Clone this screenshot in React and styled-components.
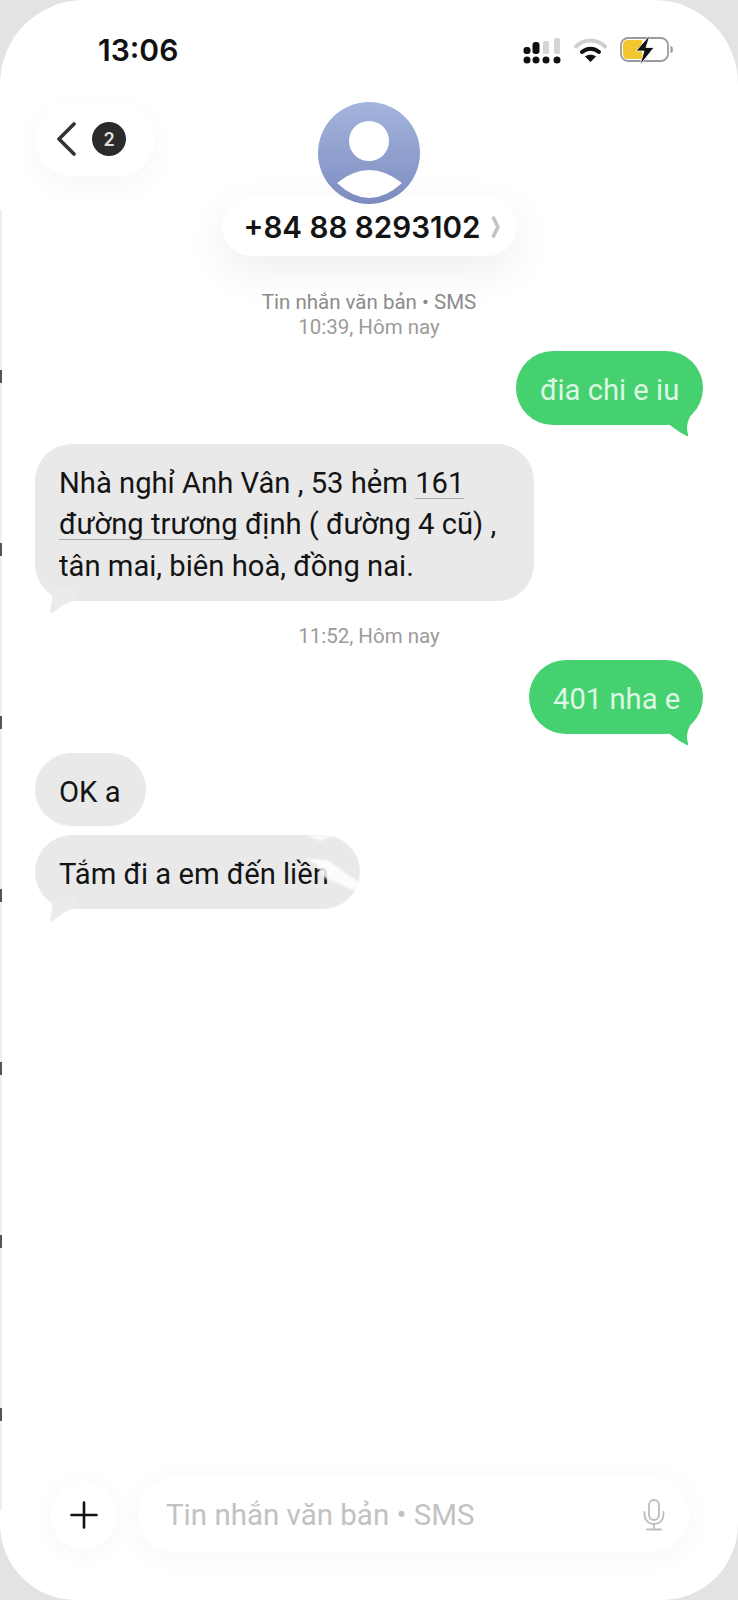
import React from "react";
import styled, { createGlobalStyle } from "styled-components";

const Global = createGlobalStyle`
  html, body { margin: 0; padding: 0; background: #e3e3e3; }
  body { font-family: Roboto, "Noto Sans", sans-serif; -webkit-font-smoothing: antialiased; }
`;

const Screen = styled.div`
  width: 738px;
  height: 1600px;
  background: #fff;
  border-radius: 84px 84px 76px 76px;
  display: flex;
  flex-direction: column;
  overflow: hidden;
  box-sizing: border-box;
  position: relative;
`;
const EdgeMarks = styled.div`
  position: absolute;
  left: 0;
  top: 210px;
  bottom: 90px;
  width: 2px;
  background: repeating-linear-gradient(
    180deg,
    #f0f0f0 0,
    #f0f0f0 160px,
    #555 160px,
    #555 173px
  );
`;

const StatusBar = styled.div`
  height: 102px;
  box-sizing: border-box;
  padding: 32px 64px 0 98px;
  display: flex;
  justify-content: space-between;
  align-items: flex-start;
`;
const Time = styled.div`
  font-family: Inter, sans-serif;
  font-size: 30px;
  font-weight: 600;
  line-height: 36px;
  color: #111;
`;
const StatusIcons = styled.div`
  display: flex;
  align-items: center;
  gap: 13px;
  height: 36px;
`;

const Header = styled.header`
  display: grid;
  grid-template-columns: 1fr auto 1fr;
  height: 168px;
  padding-left: 35px;
  box-sizing: border-box;
`;
const BackPill = styled.div`
  justify-self: start;
  width: 120px;
  height: 74px;
  box-sizing: border-box;
  padding-left: 21px;
  border-radius: 37px;
  background: #fff;
  box-shadow: 0 10px 30px rgba(0, 0, 0, 0.035);
  display: flex;
  align-items: center;
  gap: 16px;
`;
const Badge = styled.div`
  width: 34px;
  height: 34px;
  border-radius: 50%;
  background: #2b2b2b;
  color: #e0e0e0;
  font-family: Inter, sans-serif;
  font-size: 18px;
  font-weight: 600;
  display: flex;
  align-items: center;
  justify-content: center;
`;
const Contact = styled.div`
  display: flex;
  flex-direction: column;
  align-items: center;
  margin-left: -35px;
`;
const Avatar = styled.div`
  position: relative;
  z-index: 1;
  width: 102px;
  height: 102px;
  border-radius: 50%;
  overflow: hidden;
  background: linear-gradient(180deg, #a3b5dd 0%, #7d8cc0 100%);
`;
const NamePill = styled.div`
  margin-top: -7px;
  position: relative;
  width: 295px;
  height: 59px;
  box-sizing: border-box;
  padding-left: 22px;
  border-radius: 30px;
  background: #fff;
  box-shadow: 0 14px 44px rgba(0, 0, 0, 0.07);
  display: flex;
  align-items: center;
  gap: 11px;
`;
const Name = styled.div`
  font-family: Inter, sans-serif;
  font-size: 29.6px;
  font-weight: 600;
  color: #141414;
  white-space: nowrap;
`;

const Thread = styled.main`
  flex: 1;
  display: flex;
  flex-direction: column;
  padding: 20px 35px 0 35px;
`;
const Meta = styled.div`
  text-align: center;
  color: ${(p) => (p.$light ? "#9b9b9b" : "#8c8c8c")};
  font-size: 20.5px;
  line-height: 25px;
  margin-top: ${(p) => p.$top || 0}px;
`;
const Row = styled.div`
  display: flex;
  justify-content: ${(p) => (p.$out ? "flex-end" : "flex-start")};
  margin-top: ${(p) => p.$top || 0}px;
`;
const Bubble = styled.div`
  position: relative;
  box-sizing: border-box;
  border-radius: 37px;
  padding: 19px 24px 13px 24px;
  font-size: 29.2px;
  line-height: 41.7px;
  white-space: nowrap;
  width: ${(p) => p.$w}px;
  background: ${(p) => (p.$out ? "#45d16f" : "#e9e9e9")};
  color: ${(p) => (p.$out ? "#dcf7e4" : "#141414")};
`;
const Linked = styled.span`
  text-decoration: underline;
  text-decoration-color: #a9a9a9;
  text-decoration-thickness: 1px;
  text-underline-offset: 5px;
`;
const TailOut = styled.svg`
  position: absolute;
  right: 0;
  bottom: -14px;
`;
const TailIn = styled.svg`
  position: absolute;
  left: 0;
  bottom: -14px;
`;
const Blot = styled.svg`
  position: absolute;
  right: 0;
  top: 0;
  filter: blur(1.2px);
`;

const Composer = styled.footer`
  display: flex;
  align-items: center;
  gap: 21px;
  padding: 0 49px 48px 50px;
`;
const PlusButton = styled.div`
  width: 67px;
  height: 68px;
  flex: none;
  border-radius: 50%;
  background: #fff;
  box-shadow: 0 4px 26px rgba(0, 0, 0, 0.04);
  display: flex;
  align-items: center;
  justify-content: center;
`;
const InputPill = styled.div`
  flex: 1;
  height: 75px;
  box-sizing: border-box;
  padding: 0 23px 0 28px;
  border-radius: 37px;
  background: #fff;
  box-shadow: 0 4px 30px rgba(0, 0, 0, 0.04);
  display: flex;
  align-items: center;
  justify-content: space-between;
`;
const Placeholder = styled.div`
  color: #c2c2c2;
  font-size: 29.5px;
`;

const Chevron = () => (
  <svg width="20" height="34" viewBox="0 0 20 34" fill="none">
    <path d="M18 2 L3 17 L18 32" stroke="#333" strokeWidth="3.6" strokeLinecap="round" strokeLinejoin="round" />
  </svg>
);

const Signal = () => (
  <svg width="38" height="28" viewBox="0 0 38 28" fill="#111">
    <rect x="0.5" y="11" width="7" height="7" rx="3" />
    <circle cx="4" cy="24" r="3.5" />
    <rect x="9.5" y="6" width="7" height="12" rx="3" />
    <circle cx="13" cy="24" r="3.5" />
    <rect x="20" y="5" width="6" height="13" rx="1.5" fill="#d6d6d6" />
    <circle cx="23" cy="24" r="3.5" />
    <rect x="31" y="2" width="6" height="16" rx="1.5" fill="#d6d6d6" />
    <circle cx="34" cy="24" r="3.5" />
  </svg>
);

const Wifi = () => (
  <svg width="33" height="26" viewBox="0 0 33 26" fill="none">
    <path d="M2 9.5 C10 1.5 23 1.5 31 9.5" stroke="#cfcfcf" strokeWidth="4" strokeLinecap="round" />
    <path d="M8 15 C13 10.5 20 10.5 25 15" stroke="#111" strokeWidth="4" strokeLinecap="round" />
    <path d="M16.5 25 L11 19.5 C14 17.2 19 17.2 22 19.5 Z" fill="#111" />
  </svg>
);

const Battery = () => (
  <svg width="54" height="30" viewBox="0 0 54 30" fill="none">
    <rect x="1" y="3" width="47" height="23" rx="7" fill="#fff" stroke="#9a9a9a" strokeWidth="1.8" />
    <path d="M3 10 Q3 5 8 5 H22 V24 H8 Q3 24 3 19 Z" fill="#f2c72e" />
    <path d="M50.5 10.5 Q53 11.5 53 14.5 Q53 17.5 50.5 18.5 Z" fill="#9a9a9a" />
    <path d="M30 0 L16 16 H24 L20 30 L34 12.5 H26 Z" fill="#111" stroke="#fff" strokeWidth="0.8" />
  </svg>
);

const Person = () => (
  <svg width="102" height="102" viewBox="0 0 102 102">
    <circle cx="51" cy="39" r="20" fill="#fff" />
    <path d="M19 81 Q51 55 84 81 Q51 111 19 81 Z" fill="#fff" />
  </svg>
);

const Caret = () => (
  <svg width="10" height="22" viewBox="0 0 10 22" fill="none">
    <path d="M2.5 2 L7 11 L2.5 20" stroke="#c3c3c3" strokeWidth="3.6" strokeLinecap="round" strokeLinejoin="round" />
  </svg>
);

const Mic = () => (
  <svg width="24" height="32" viewBox="0 0 24 32" fill="none" stroke="#bdbdbd" strokeWidth="1.8" strokeLinecap="round">
    <rect x="7" y="1" width="10" height="20" rx="5" />
    <path d="M2.5 13 V15.5 C2.5 21 6.5 25 12 25 C17.5 25 21.5 21 21.5 15.5 V13" />
    <path d="M12 25 V30 M5 30.5 H19" />
  </svg>
);

const Plus = () => (
  <svg width="28" height="28" viewBox="0 0 28 28" fill="none">
    <path d="M14 1.5 V26.5 M1.5 14 H26.5" stroke="#111" strokeWidth="2.6" strokeLinecap="round" />
  </svg>
);

const OutTail = () => (
  <TailOut width="40" height="36" viewBox="0 0 40 36">
    <path d="M4 20 C10 24 16 29 22 32 Q26 35 25 31 C22 22 26 12 36.5 0 L10 0 Z" fill="#45d16f" />
  </TailOut>
);

const InTail = () => (
  <TailIn width="40" height="36" viewBox="0 0 40 36">
    <path d="M17 10 L17 21 Q16 28 15 33 Q16 35 19 33 C25 28 31 24 40 21 L40 10 Z" fill="#ebebeb" />
  </TailIn>
);

export default function App() {
  return (
    <>
      <Global />
      <Screen>
        <EdgeMarks />
        <StatusBar>
          <Time>13:06</Time>
          <StatusIcons>
            <Signal />
            <Wifi />
            <Battery />
          </StatusIcons>
        </StatusBar>
        <Header>
          <BackPill>
            <Chevron />
            <Badge>2</Badge>
          </BackPill>
          <Contact>
            <Avatar>
              <Person />
            </Avatar>
            <NamePill>
              <Name>+84 88 8293102</Name>
              <Caret />
            </NamePill>
          </Contact>
        </Header>
        <Thread>
          <Meta>Tin nhắn văn bản • SMS</Meta>
          <Meta $light>10:39, Hôm nay</Meta>
          <Row $out $top={11}>
            <Bubble $out $w={187}>
              đia chi e iu
              <OutTail />
            </Bubble>
          </Row>
          <Row $top={19}>
            <Bubble $w={499}>
              Nhà nghỉ Anh Vân , 53 hẻm <Linked>161</Linked>
              <br />
              <Linked>đường trương</Linked> định ( đường 4 cũ) ,
              <br />
              tân mai, biên hoà, đồng nai.
              <InTail />
            </Bubble>
          </Row>
          <Meta $light $top={23}>11:52, Hôm nay</Meta>
          <Row $out $top={11}>
            <Bubble $out $w={174}>
              401 nha e
              <OutTail />
            </Bubble>
          </Row>
          <Row $top={19}>
            <Bubble $w={111}>OK a</Bubble>
          </Row>
          <Row $top={9}>
            <Bubble $w={325}>
              Tắm đi a em đến liền
              <InTail />
              <Blot width="100" height="75" viewBox="0 0 100 75">
                <path d="M43 23 L67 25 L100 48 L100 58 L65 43 L55 28 Z" fill="#fff" opacity="0.85" />
                <path d="M46 0 H76 L60 6 Z" fill="#fff" opacity="0.8" />
              </Blot>
            </Bubble>
          </Row>
        </Thread>
        <Composer>
          <PlusButton>
            <Plus />
          </PlusButton>
          <InputPill>
            <Placeholder>Tin nhắn văn bản • SMS</Placeholder>
            <Mic />
          </InputPill>
        </Composer>
      </Screen>
    </>
  );
}
